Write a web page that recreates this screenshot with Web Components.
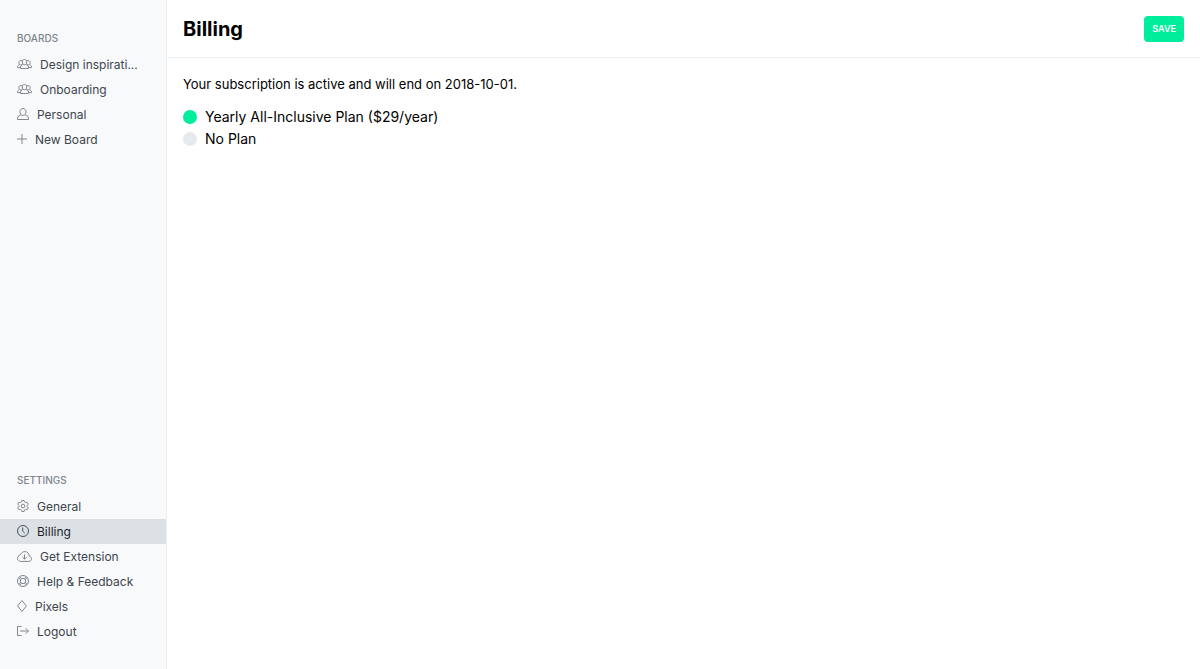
<!DOCTYPE html>
<html lang="en">
<head>
<meta charset="utf-8">
<meta name="viewport" content="width=device-width, initial-scale=1">
<title>Billing</title>
<style>
  html, body { margin: 0; height: 100%; }
  body { font-family: Inter, "Liberation Sans", sans-serif; color: #000; background: #fff; }
</style>
</head>
<body>
<app-shell>
  <nav-section slot="nav" label="Boards">
    <nav-item icon="team">Design inspirati...</nav-item>
    <nav-item icon="team">Onboarding</nav-item>
    <nav-item icon="person">Personal</nav-item>
    <nav-item icon="plus">New Board</nav-item>
  </nav-section>
  <nav-section slot="nav" label="Settings">
    <nav-item icon="gear">General</nav-item>
    <nav-item icon="clock" current>Billing</nav-item>
    <nav-item icon="cloud">Get Extension</nav-item>
    <nav-item icon="ring">Help &amp; Feedback</nav-item>
    <nav-item icon="diamond">Pixels</nav-item>
    <nav-item icon="exit">Logout</nav-item>
  </nav-section>
  <page-header>Billing<save-button slot="action">SAVE</save-button></page-header>
  <plan-picker>Your subscription is active and will end on 2018-10-01.</plan-picker>
</app-shell>

<script>
const ICONS = {
  team: [15, 10, `<path d="M5.300 2.900C5.300 1.300 6.100.5 7.500.5s2.200.8 2.200 2.400-.8 2.800-2.200 2.800-2.200-1.200-2.200-2.800zM6 5.300c-.2 1-2.500.7-2.500 2.700v1.500h8V8c0-2-2.300-1.700-2.500-2.700M5.200 1.900C3.300.9 1.800 2 1.900 3.700c0 1.500.8 2.300 1.800 2.300.7 0 1.300-.3 1.600-1M2.400 5.600C2.200 6.400.5 6.200.5 7.700v.9h3M9.800 1.900c1.900-1 3.400.1 3.300 1.800 0 1.500-.8 2.300-1.800 2.300-.7 0-1.300-.3-1.600-1M12.600 5.600c.2.800 1.900.6 1.900 2.100v.9h-3"/>`],
  person: [12, 12, `<path d="M3 3.700C3 1.700 4.200.5 6 .5s3 1.200 3 3.200-1.200 3.700-3 3.700-3-1.700-3-3.700zM4 6.600C3.600 7.800.5 7.500.5 10v1.500h11V10c0-2.500-3.100-2.200-3.500-3.400"/>`],
  plus: [10, 12, `<path d="M5 1v10M0 6h10"/>`],
  gear: [12, 12, `<path d="M4.900.5h2.200l.4 1.500 1.100.6 1.500-.4 1.200 1.900-1.100 1.200v1.400l1.100 1.200-1.200 1.900-1.500-.4-1.100.6-.4 1.500H4.900L4.500 10l-1.100-.6-1.500.4L.7 7.900l1.100-1.200V5.300L.7 4.100l1.200-1.900 1.500.4L4.500 2z"/><circle cx="6" cy="6" r="1.800"/>`],
  clock: [12, 12, `<circle cx="6" cy="6" r="5.500"/><path d="M5.700 2.600V6.200l2.100 2"/>`],
  cloud: [15, 11, `<path d="M3.600 10.400h8.200c1.600 0 2.700-1.100 2.700-2.600 0-1.400-1-2.400-2.300-2.600C12.100 2.500 10.200.6 7.800.6c-2 0-3.500 1.200-4.100 2.900-1-.1-1.700.6-1.600 1.600C1.100 5.500.5 6.400.5 7.500c0 1.700 1.300 2.900 3.100 2.900z"/><path d="M7.500 3.400v4.600M5.300 6l2.200 2.200L9.700 6"/>`],
  ring: [12, 12, `<circle cx="6" cy="6" r="5.500"/><circle cx="6" cy="6" r="2.700"/><path stroke-width=".8" d="M2.900 1.500l1.500 2.300M1.500 2.900l2.300 1.500M9.100 1.500L7.600 3.800M10.500 2.900L8.200 4.400M2.900 10.500l1.500-2.300M1.500 9.100l2.300-1.500M9.100 10.500L7.600 8.200M10.500 9.100L8.200 7.600"/>`],
  diamond: [10, 12, `<path d="M5 .6L9.400 6 5 11.400.6 6z"/>`],
  exit: [12, 10, `<path d="M4.500.5h-4v9h4M3 5h8.300M8.600 2.200L11.400 5 8.600 7.800"/>`]
};

class ShadowElement extends HTMLElement {
  constructor() {
    super();
    this.attachShadow({ mode: "open" });
  }
  connectedCallback() {
    this.shadowRoot.innerHTML = this.render();
  }
}

customElements.define("app-shell", class extends ShadowElement {
  render() {
    return `<style>
      :host { display: flex; min-height: 100vh; }
      nav {
        box-sizing: border-box; flex: 0 0 167px; padding: 24px 0 25px;
        display: flex; flex-direction: column; justify-content: space-between;
        background: #f8f9fb; border-right: 1px solid #edf0f2;
      }
      main { flex: 1; min-width: 0; }
    </style>
    <nav><slot name="nav"></slot></nav>
    <main><slot></slot></main>`;
  }
});

customElements.define("nav-section", class extends ShadowElement {
  render() {
    return `<style>
      :host { display: block; }
      h2 {
        margin: 0; padding: 0 17px; font-size: 10px; line-height: 28px;
        font-weight: 500; text-transform: uppercase; color: #7c858c;
      }
    </style>
    <h2>${this.getAttribute("label")}</h2>
    <slot></slot>`;
  }
});

customElements.define("nav-item", class extends ShadowElement {
  render() {
    const [w, h, shape] = ICONS[this.getAttribute("icon")];
    return `<style>
      :host { display: block; color: #3d454c; --icon: #80888e; }
      :host([current]) { background: #dce1e5; color: #1c2329; --icon: #4a5359; }
      a {
        display: flex; align-items: center; gap: 8px; padding: 0 17px;
        font-size: 12px; line-height: 25px; color: inherit;
        text-decoration: none; white-space: nowrap;
      }
      svg { flex: none; margin-bottom: 1px; fill: none; stroke: var(--icon); stroke-width: 1; }
    </style>
    <a href="#"${this.hasAttribute("current") ? ' aria-current="page"' : ""}>
      <svg width="${w}" height="${h}" viewBox="0 0 ${w} ${h}" aria-hidden="true">${shape}</svg>
      <span><slot></slot></span>
    </a>`;
  }
});

customElements.define("page-header", class extends ShadowElement {
  render() {
    return `<style>
      :host {
        display: flex; align-items: center; justify-content: space-between;
        padding: 16px 16px 15px; border-bottom: 1px solid #edf0f2;
      }
      h1 { margin: 0; font-size: 20px; line-height: 26px; font-weight: 700; }
    </style>
    <h1><slot></slot></h1>
    <slot name="action"></slot>`;
  }
});

customElements.define("save-button", class extends ShadowElement {
  render() {
    return `<style>
      :host { display: block; }
      button {
        display: block; border: 0; border-radius: 4px; padding: 0 8px;
        font: 600 9px/26px Inter, "Liberation Sans", sans-serif;
        color: #fff; background: #00ee9b;
      }
    </style>
    <button type="button"><slot></slot></button>`;
  }
});

customElements.define("plan-picker", class extends ShadowElement {
  render() {
    return `<style>
      :host { display: block; padding: 16px; }
      p { margin: 0 0 12px; font-size: 13px; line-height: 20px; }
      form { display: grid; }
      label { display: flex; align-items: center; gap: 8px; font-size: 14px; line-height: 22px; }
      input {
        appearance: none; flex: none; width: 14px; height: 14px; margin: 0;
        border-radius: 50%; background: #e6eaee;
      }
      input:checked { background: #00ee9b; }
    </style>
    <p><slot></slot></p>
    <form>
      <label><input type="radio" name="plan" checked>Yearly All-Inclusive Plan ($29/year)</label>
      <label><input type="radio" name="plan">No Plan</label>
    </form>`;
  }
});
</script>
</body>
</html>
